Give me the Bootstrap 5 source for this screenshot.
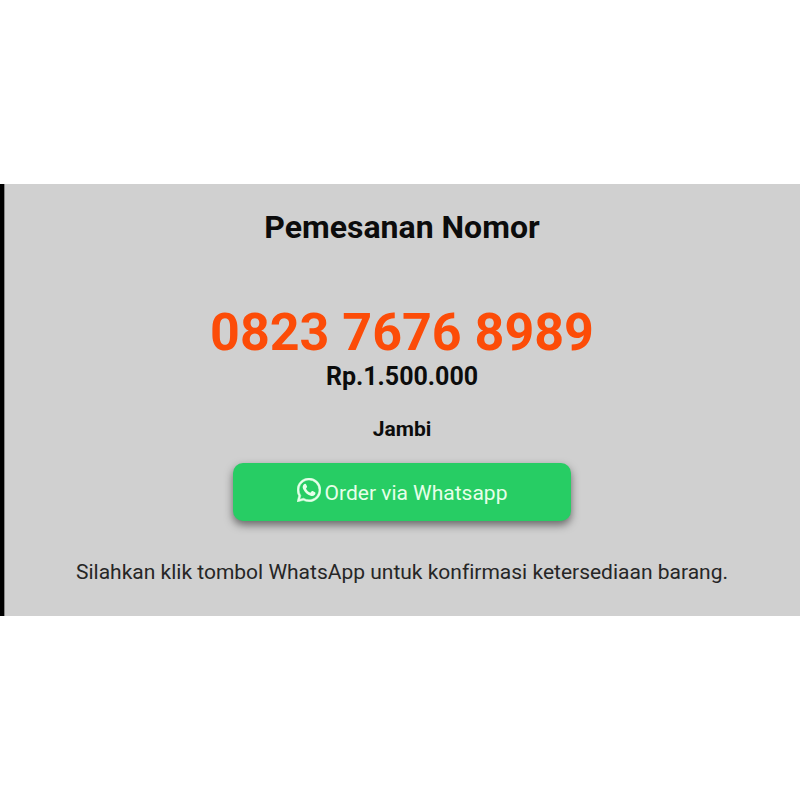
<!DOCTYPE html>
<html lang="id">
<head>
<meta charset="utf-8">
<meta name="viewport" content="width=device-width, initial-scale=1">
<title>Pemesanan Nomor</title>
<link href="https://cdn.jsdelivr.net/npm/bootstrap@5.3.0/dist/css/bootstrap.min.css" rel="stylesheet">
<style>
body { font-family: Roboto, "Liberation Sans", sans-serif; background: #fff; }
.order-panel { background: #d0d0d0; border-left: 4px solid #000; box-shadow: inset 1px 0 #888; color: #0c0c0c; padding: 23px 16px 30px; }
.order-title { font-size: 32px; line-height: 40px; font-weight: 700; margin-bottom: 58px; }
.order-number { font-size: 52px; line-height: 56px; font-weight: 700; color: #fc4c08; }
.order-price { font-size: 25px; line-height: 32px; font-weight: 700; }
.order-city { font-size: 21px; line-height: 24px; font-weight: 700; margin: 24px 0 22px; }
.btn-whatsapp { --bs-btn-color: #e6ffe9; --bs-btn-bg: #27cd64; --bs-btn-hover-color: #fff; --bs-btn-hover-bg: #20b857; width: 338px; max-width: 100%; height: 58px; padding: 8px 12px 4px; border: 0; border-radius: 10px; font-size: 21px; box-shadow: 0 4px 8px rgba(0,0,0,.5); }
.order-note { font-size: 21px; line-height: 28px; color: #262626; margin-top: 37px; font-variant-ligatures: none; }
</style>
</head>
<body class="min-vh-100 d-flex flex-column justify-content-center">
<main class="order-panel text-center">
  <h1 class="order-title">Pemesanan Nomor</h1>
  <p class="order-number mb-0">0823 7676 8989</p>
  <p class="order-price mb-0">Rp.1.500.000</p>
  <p class="order-city">Jambi</p>
  <button type="button" class="btn btn-whatsapp d-inline-flex align-items-center justify-content-center gap-1">
    <svg class="mb-2" width="24" height="24" viewBox="0 0 16 16" fill="currentColor" aria-hidden="true"><path d="M13.601 2.326A7.854 7.854 0 0 0 7.994 0C3.627 0 .068 3.558.064 7.926c0 1.399.366 2.76 1.057 3.965L0 16l4.204-1.102a7.933 7.933 0 0 0 3.79.965h.004c4.368 0 7.926-3.558 7.93-7.93A7.898 7.898 0 0 0 13.6 2.326zM7.994 14.521a6.573 6.573 0 0 1-3.356-.92l-.24-.144-2.494.654.666-2.433-.156-.251a6.56 6.56 0 0 1-1.007-3.505c0-3.626 2.957-6.584 6.591-6.584a6.56 6.56 0 0 1 4.66 1.931 6.557 6.557 0 0 1 1.928 4.66c-.004 3.639-2.961 6.592-6.592 6.592z" stroke="currentColor" stroke-width=".3"/><path d="M4.5 4.3C5 3.7 5.8 3.600 6.100 4.300L6.700 5.700C6.900 6.200 6.300 6.700 6 7.100C6.700 8.400 7.600 9.200 8.900 9.800L9.800 8.800C10 8.600 10.200 8.600 10.500 8.700L12 9.500C12.500 9.800 12.300 10.700 11.900 11.200C11.200 12 10.100 12.200 9.100 11.800C6.800 11 5.100 9.500 4.100 7.300C3.600 6.200 3.700 5.200 4.500 4.300Z"/></svg>
    <span>Order via Whatsapp</span>
  </button>
  <p class="order-note mb-0">Silahkan klik tombol WhatsApp untuk konfirmasi ketersediaan barang.</p>
</main>
<script src="https://cdn.jsdelivr.net/npm/bootstrap@5.3.0/dist/js/bootstrap.bundle.min.js"></script>
</body>
</html>
